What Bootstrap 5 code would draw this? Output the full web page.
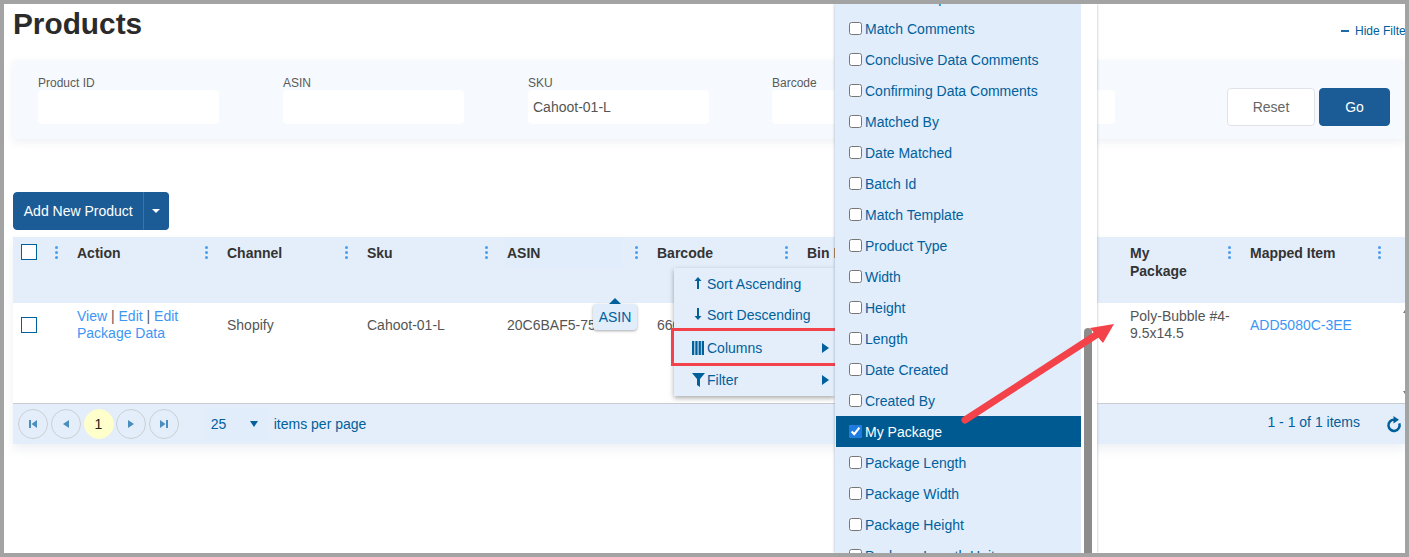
<!DOCTYPE html>
<html lang="en">
<head>
<meta charset="utf-8">
<title>Products</title>
<link href="https://cdn.jsdelivr.net/npm/bootstrap@5.3.0/dist/css/bootstrap.min.css" rel="stylesheet">
<style>
html,body{height:100%;margin:0;overflow:hidden;background:#fff}
body{font-family:"Liberation Sans",Arial,sans-serif;font-size:14px;color:#555}
.frame{position:relative;height:557px;border:4px solid #a3a3a3;overflow:hidden;background:#fff;padding-left:9px}
.title-row{height:56px}
.page-title{font-size:29.8px;font-weight:700;color:#2b2b2b;line-height:40px;margin:0}
.hide-link{font-size:12px;color:#00609c;white-space:nowrap;position:absolute;top:20px;left:1337px;text-decoration:none;line-height:14px}
.hide-link i{display:inline-block;width:8px;height:2px;background:#1c6aa8;vertical-align:3px;margin-right:6px}
.filter-box{background:#f6f9fd;height:79px;box-shadow:0 3px 8px rgba(40,70,110,.08);padding-left:25px;padding-right:15px;border-radius:3px}
.filter-field{width:181px;margin-right:64px}
.filter-field:nth-child(3){margin-right:63px}
.filter-field.w5{margin-right:0;margin-left:-83px}
.filter-btns{margin-top:28px}
.filter-label{font-size:12px;color:#5a5a5a;line-height:14px;margin:16px 0 0;display:block;height:14px}
.filter-input.form-control{height:34px;border:0;border-radius:4px;background:#fff;font-size:14px;color:#555;padding:0 5px;box-shadow:none}
.btn-reset.btn{width:88px;height:38px;background:#fff;border:1px solid #dfe3e8;color:#666;font-size:14px;padding:0;border-radius:4px}
.btn-go.btn{width:71px;height:38px;background:#1c5c96;border:1px solid #1c5c96;color:#fff;font-size:14px;padding:0;border-radius:4px;margin-left:4px}
.add-group{margin-top:53px;height:38px;width:156px}
.add-group .btn{background:#1c5c96;border-color:#1c5c96;color:#fff;font-size:14px;padding:0;height:38px;border-radius:4px}
.add-main{width:130px}
.add-caret{width:26px;border-left-color:#3a74a8!important;display:flex;align-items:center;justify-content:center}
.add-caret svg{display:block}
.grid-box{margin-top:7px;width:1392px;box-shadow:0 5px 10px rgba(40,70,110,.08)}
.grid-table.table{table-layout:fixed;width:1392px;margin:0;--bs-table-bg:transparent;color:#555;font-size:14px}
.grid-table col:nth-child(1){width:54px}
.grid-table col:nth-child(2),.grid-table col:nth-child(5),.grid-table col:nth-child(6),.grid-table col:nth-child(7),.grid-table col:nth-child(10){width:150px}
.grid-table col:nth-child(3),.grid-table col:nth-child(4){width:140px}
.grid-table col:nth-child(8){width:173px}
.grid-table col:nth-child(9){width:120px}
.grid-table col:nth-child(11){width:15px}
.grid-table th,.grid-table td{border:0;padding:0 10px;vertical-align:top;overflow:hidden;white-space:nowrap}
.grid-table thead tr{background:#e4eefa;height:66px}
.grid-table th{font-weight:700;color:#333;line-height:18px;padding-top:7px;background:#e4eefa}
.head-active{background:#e1edfb;flex:0 0 117px;margin:-7px 0 0 -2px;padding:7px 0 6px 2px;height:31px}
.kebab{display:block;width:3px;height:13px;flex:none;margin-top:2px;margin-right:-1px}
.col-check{padding-left:8px!important}
.tick{display:block;appearance:none;width:16px;height:16px;margin:0;border:1.5px solid #00609c;background:#fff;flex:none}
.grid-table tbody tr{height:100px;background:#fff}
.grid-table td{line-height:17px;padding-top:14px;background:#fff}
.grid-table td.wrapping{white-space:normal;padding-top:5px}
.grid-table td a{color:#3d96f5;text-decoration:none}
.grid-table td .sep{color:#555}
.pager{height:41px;background:#e4eefa;border-top:1px solid #c8ccd0;padding-left:5px;color:#00609c}
.pg-round{width:30px;height:30px;border-radius:50%;border:1px solid #c9ced4;background:transparent;padding:0;display:flex;align-items:center;justify-content:center;margin-right:2.75px;flex:none}
.pg-current{background:#ffffcc;border-color:#ffffcc;color:#222;font-size:14px}
.pg-size{width:63px;height:30px;background:#e1edfb;border-radius:4px;margin-left:23px;padding:0 10px 0 6px;margin-right:6px}
.pg-info{margin-left:auto;margin-right:45px;padding-bottom:4px}
.pg-refresh{position:absolute;left:1382px;top:411px}
.scroll-tick{position:absolute;left:1399px;width:0;height:0;border:2.5px solid transparent}
.tick-up{top:306px;border-top:0;border-bottom:3px solid #777}
.tick-down{top:387px;border-bottom:0;border-top:3px solid #777}
.ctx-menu{position:absolute;left:670px;top:264px;width:161px;height:128px;background:#e4eefa;box-shadow:0 2px 5px rgba(0,0,0,.35);color:#00609c;margin:0;padding:0;list-style:none}
.ctx-item{position:absolute;left:0;right:0;height:20px;line-height:20px;padding-left:33px}
.ctx-a{top:6px}.ctx-b{top:37px}.ctx-c{top:70px}.ctx-d{top:102px}
.ctx-ico{position:absolute;left:18px;top:3px}
.ctx-ico.thin{left:20px}
.ctx-caret{position:absolute;right:6px;top:5px}
.red-box{position:absolute;left:667px;top:324px;width:167px;height:38px;border:3px solid #f4424a}
.tip-box{position:absolute;left:589px;top:300px;width:44px;height:26px;background:#e1edfb;border-radius:4px;box-shadow:0 1px 3px rgba(0,0,0,.35);color:#00609c;text-align:center;line-height:27px}
.tip-box::before{content:"";position:absolute;left:16px;top:-6px;border:6px solid transparent;border-top:0;border-bottom-color:#00609c}
.col-menu{position:absolute;left:831px;top:0;width:262px;height:549px;background:#fff;box-shadow:-1px 0 2px rgba(60,90,130,.25),1px 0 2px rgba(60,90,130,.2);overflow:hidden}
.col-list{position:absolute;left:0;top:-22px;width:246px;background:#e1edfb;margin:0;padding:0;border-radius:0;min-height:620px}
.col-list .list-group-item{background:transparent;border:0;border-radius:0;height:31px;padding:2px 0 0 13px;color:#00609c;font-size:14px;display:flex;align-items:center;gap:3px;margin-left:1px}
.col-list .list-group-item input{margin:-3px 0 0;width:13px;height:13px;flex:none;accent-color:#1e7be0}
.col-list .list-group-item.picked{background:#005a92;color:#fff}
.col-thumb{position:absolute;left:249px;top:324px;width:8px;height:225px;background:#8c8c8c;border-radius:4px 4px 0 0}
.red-arrow{position:absolute;left:0;top:0;pointer-events:none}
</style>
</head>
<body>
<svg width="0" height="0" class="position-absolute">
  <symbol id="dots" viewBox="0 0 3 13"><circle cx="1.5" cy="1.5" r="1.5" fill="#4a9cf0"/><circle cx="1.5" cy="6.5" r="1.5" fill="#4a9cf0"/><circle cx="1.5" cy="11.5" r="1.5" fill="#4a9cf0"/></symbol>
  <symbol id="right" viewBox="0 0 7 10"><path d="M0 0l7 5-7 5z" fill="#00609c"/></symbol>
</svg>
<div class="frame">
  <div class="title-row"><h1 class="page-title">Products</h1></div>
  <a class="hide-link"><i></i>Hide Filter</a>

  <div class="filter-box d-flex">
    <div class="filter-field"><label class="filter-label">Product ID</label><input class="form-control filter-input"></div>
    <div class="filter-field"><label class="filter-label">ASIN</label><input class="form-control filter-input"></div>
    <div class="filter-field"><label class="filter-label">SKU</label><input class="form-control filter-input" value="Cahoot-01-L"></div>
    <div class="filter-field"><label class="filter-label">Barcode</label><input class="form-control filter-input"></div>
    <div class="filter-field w5"><label class="filter-label">&nbsp;</label><input class="form-control filter-input"></div>
    <div class="d-flex ms-auto align-items-start filter-btns">
      <button class="btn btn-reset">Reset</button><button class="btn btn-go">Go</button>
    </div>
  </div>

  <div class="btn-group add-group d-flex">
    <button class="btn add-main">Add New Product</button>
    <button class="btn add-caret" aria-label="More"><svg width="8" height="4" viewBox="0 0 8 4"><path d="M0 0h8L4 4z" fill="#fff"/></svg></button>
  </div>

  <div class="grid-box">
    <table class="table grid-table">
      <colgroup><col><col><col><col><col><col><col><col><col><col><col></colgroup>
      <thead>
        <tr>
          <th class="col-check"><div class="d-flex justify-content-between"><input type="checkbox" class="tick" aria-label="Select all"><svg class="kebab"><use href="#dots"/></svg></div></th>
          <th><div class="d-flex justify-content-between"><span>Action</span><svg class="kebab"><use href="#dots"/></svg></div></th>
          <th><div class="d-flex justify-content-between"><span>Channel</span><svg class="kebab"><use href="#dots"/></svg></div></th>
          <th><div class="d-flex justify-content-between"><span>Sku</span><svg class="kebab"><use href="#dots"/></svg></div></th>
          <th><div class="d-flex justify-content-between"><span class="head-active">ASIN</span><svg class="kebab"><use href="#dots"/></svg></div></th>
          <th><div class="d-flex justify-content-between"><span>Barcode</span><svg class="kebab"><use href="#dots"/></svg></div></th>
          <th><div class="d-flex justify-content-between"><span>Bin Location</span><svg class="kebab"><use href="#dots"/></svg></div></th>
          <th></th>
          <th><div class="d-flex justify-content-between"><span>My<br>Package</span><svg class="kebab"><use href="#dots"/></svg></div></th>
          <th><div class="d-flex justify-content-between"><span>Mapped Item</span><svg class="kebab"><use href="#dots"/></svg></div></th>
          <th></th>
        </tr>
      </thead>
      <tbody>
        <tr>
          <td class="col-check"><input type="checkbox" class="tick" aria-label="Select row"></td>
          <td class="wrapping"><a href="#">View</a> <span class="sep">|</span> <a href="#">Edit</a> <span class="sep">|</span> <a href="#">Edit Package Data</a></td>
          <td>Shopify</td>
          <td>Cahoot-01-L</td>
          <td>20C6BAF5-75EE</td>
          <td>66012345</td>
          <td></td>
          <td></td>
          <td class="wrapping">Poly-Bubble #4-9.5x14.5</td>
          <td><a href="#">ADD5080C-3EE</a></td>
          <td></td>
        </tr>
      </tbody>
    </table>
    <div class="pager d-flex align-items-center">
      <button class="pg-round" aria-label="First"><svg width="10" height="10" viewBox="0 0 10 10"><path d="M1 1h2v8H1zM9 1v8L3.500 5z" fill="#4b8dbd"/></svg></button>
      <button class="pg-round" aria-label="Previous"><svg width="10" height="10" viewBox="0 0 10 10"><path d="M8 1v8L2 5z" fill="#4b8dbd"/></svg></button>
      <button class="pg-round pg-current">1</button>
      <button class="pg-round" aria-label="Next"><svg width="10" height="10" viewBox="0 0 10 10"><path d="M2 1v8l6-4z" fill="#4b8dbd"/></svg></button>
      <button class="pg-round" aria-label="Last"><svg width="10" height="10" viewBox="0 0 10 10"><path d="M1 1v8l5.500-4zM7 1h2v8H7z" fill="#4b8dbd"/></svg></button>
      <div class="pg-size d-flex align-items-center justify-content-between"><span>25</span><svg width="8" height="6" viewBox="0 0 8 6"><path d="M0 0h8L4 6z" fill="#00609c"/></svg></div>
      <span>items per page</span>
      <span class="pg-info">1 - 1 of 1 items</span>
    </div>
  </div>

  <svg class="pg-refresh" width="16" height="18" viewBox="0 0 16 18"><path d="M8 4.700A5.600 5.600 0 1 0 13.300 8.400" fill="none" stroke="#00609c" stroke-width="2.500"/><path d="M7.500 1v7.500L13 4.700z" fill="#00609c"/></svg>
  <span class="scroll-tick tick-up"></span>
  <span class="scroll-tick tick-down"></span>

  <div class="tip-box">ASIN</div>

  <ul class="ctx-menu">
    <li class="ctx-item ctx-a"><svg class="ctx-ico thin" width="8" height="12" viewBox="0 0 8 12"><path d="M4 0l3.500 4H5v8H3V4H.5z" fill="#00609c"/></svg>Sort Ascending</li>
    <li class="ctx-item ctx-b"><svg class="ctx-ico thin" width="8" height="12" viewBox="0 0 8 12"><path d="M4 12L.5 8H3V0h2v8h2.500z" fill="#00609c"/></svg>Sort Descending</li>
    <li class="ctx-item ctx-c"><svg class="ctx-ico" width="12" height="14" viewBox="0 0 12 14"><path d="M0 0h2.300v14H0zM3.300 0h2.300v14H3.300zM6.600 0h2.300v14H6.600zM9.700 0H12v14H9.700z" fill="#00609c"/></svg>Columns<svg class="ctx-caret" width="7" height="10"><use href="#right"/></svg></li>
    <li class="ctx-item ctx-d"><svg class="ctx-ico" width="13" height="14" viewBox="0 0 13 14"><path d="M0 0h13L8 6v8L5 12V6z" fill="#00609c"/></svg>Filter<svg class="ctx-caret" width="7" height="10"><use href="#right"/></svg></li>
  </ul>
  <div class="red-box"></div>

  <div class="col-menu">
    <ul class="list-group col-list">
      <li class="list-group-item"><input type="checkbox">Match Group</li>
      <li class="list-group-item"><input type="checkbox">Match Comments</li>
      <li class="list-group-item"><input type="checkbox">Conclusive Data Comments</li>
      <li class="list-group-item"><input type="checkbox">Confirming Data Comments</li>
      <li class="list-group-item"><input type="checkbox">Matched By</li>
      <li class="list-group-item"><input type="checkbox">Date Matched</li>
      <li class="list-group-item"><input type="checkbox">Batch Id</li>
      <li class="list-group-item"><input type="checkbox">Match Template</li>
      <li class="list-group-item"><input type="checkbox">Product Type</li>
      <li class="list-group-item"><input type="checkbox">Width</li>
      <li class="list-group-item"><input type="checkbox">Height</li>
      <li class="list-group-item"><input type="checkbox">Length</li>
      <li class="list-group-item"><input type="checkbox">Date Created</li>
      <li class="list-group-item"><input type="checkbox">Created By</li>
      <li class="list-group-item picked"><input type="checkbox" checked>My Package</li>
      <li class="list-group-item"><input type="checkbox">Package Length</li>
      <li class="list-group-item"><input type="checkbox">Package Width</li>
      <li class="list-group-item"><input type="checkbox">Package Height</li>
      <li class="list-group-item"><input type="checkbox">Package Length Unit</li>
    </ul>
    <div class="col-thumb"></div>
  </div>

  <svg class="red-arrow" width="1401" height="549" viewBox="0 0 1401 549">
    <path d="M961 416L1092 331" fill="none" stroke="#f4424a" stroke-width="7" stroke-linecap="round"/>
    <path d="M1110 320L1086 324L1099 339z" fill="#f4424a"/>
  </svg>
</div>
</body>
</html>
